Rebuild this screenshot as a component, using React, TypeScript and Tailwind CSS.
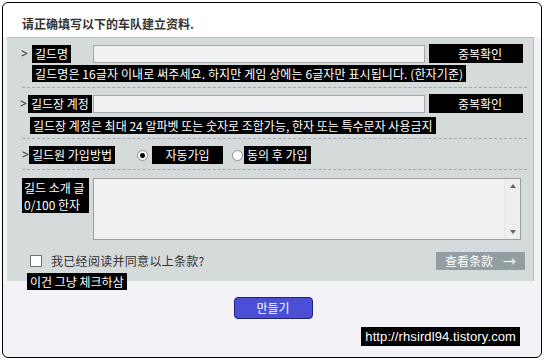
import { ChangeEvent, useState } from 'react'

const kr = { fontFamily: '"Noto Sans CJK KR", "Noto Sans", sans-serif' }
const sc = { fontFamily: '"Noto Sans CJK SC", "Noto Sans", sans-serif' }

function Tag({ children, className = '' }: { children: React.ReactNode; className?: string }) {
  return (
    <span
      className={`inline-flex items-center whitespace-nowrap bg-black px-[3px] text-[12px] leading-none text-white ${className}`}
      style={kr}
    >
      {children}
    </span>
  )
}

function Dots() {
  return <div className="ml-[15px] mr-[6px] border-t border-dashed border-[#a3a9ac]" />
}

function Radio({ on }: { on?: boolean }) {
  return (
    <span className="flex h-[11px] w-[11px] items-center justify-center rounded-full border border-[#8a8f94] bg-white">
      {on && <span className="h-[5px] w-[5px] rounded-full bg-black" />}
    </span>
  )
}

export default function App() {
  const [intro, setIntro] = useState('')

  return (
    <div className="h-[360px] w-[545px] bg-white pl-[2px] pt-[2px]">
      <div className="flex h-[356px] w-[540px] flex-col rounded-[6px] border border-black bg-[#f3f3f7]">
        {/* header */}
        <div className="flex h-[34px] items-center rounded-t-[6px] bg-white pl-[19px] pt-[8px]">
          <span className="text-[12px] font-bold text-[#333]" style={sc}>
            请正确填写以下的车队建立资料.
          </span>
        </div>

        {/* form panel */}
        <div className="ml-[4px] mr-[7px] flex flex-col border-r border-t border-[#b9bec1] bg-[#d5dadb] pb-[11px] pt-[6px]">
          {/* guild name */}
          <div className="flex h-[19px] items-center pl-[14px]">
            <span className="w-[11px] text-[12px] text-[#222]">&gt;</span>
            <div className="flex w-[61px]">
              <Tag className="h-[18px]">길드명</Tag>
            </div>
            <input className="h-[18px] w-[332px] border border-[#a4a8ac] bg-[#f0f1f3] outline-none" />
            <button className="ml-[4px] flex h-[19px] w-[94px] items-center justify-center bg-black pl-[8px] text-[12px] text-white" style={kr}>
              중복확인
            </button>
          </div>
          <div className="mt-[2px] flex pl-[25px]">
            <Tag className="h-[17px] tracking-[0.1px]">길드명은 16글자 이내로 써주세요. 하지만 게임 상에는 6글자만 표시됩니다. (한자기준)</Tag>
          </div>
          <div className="mt-[5px]">
            <Dots />
          </div>

          {/* guild master */}
          <div className="mt-[6px] flex h-[19px] items-center pl-[13px]">
            <span className="w-[8px] text-[12px] text-[#222]">&gt;</span>
            <div className="flex w-[65px]">
              <Tag className="h-[18px]">길드장 계정</Tag>
            </div>
            <input className="h-[18px] w-[332px] border border-[#a4a8ac] bg-[#f0f1f3] outline-none" />
            <button className="ml-[4px] flex h-[19px] w-[94px] items-center justify-center bg-black pl-[8px] text-[12px] text-white" style={kr}>
              중복확인
            </button>
          </div>
          <div className="mt-[4px] flex pl-[23px]">
            <Tag className="h-[17px]">길드장 계정은 최대 24 알파벳 또는 숫자로 조합가능, 한자 또는 특수문자 사용금지</Tag>
          </div>
          <div className="mt-[4px]">
            <Dots />
          </div>

          {/* join method */}
          <div className="mt-[7px] flex h-[18px] items-center pl-[15px]">
            <span className="w-[7px] text-[12px] text-[#222]">&gt;</span>
            <Tag className="h-[18px]">길드원 가입방법</Tag>
            <span className="ml-[22px]">
              <Radio on />
            </span>
            <Tag className="ml-[4px] h-[18px] w-[71px] justify-center">자동가입</Tag>
            <span className="ml-[9px]">
              <Radio />
            </span>
            <Tag className="ml-[1px] h-[18px]">동의 후 가입</Tag>
          </div>
          <div className="mt-[5px]">
            <Dots />
          </div>

          {/* intro */}
          <div className="mt-[8px] flex pl-[15px]">
            <div className="flex h-[35px] w-[67px] flex-col justify-center bg-black pl-[2px] text-[12px] leading-[17px] text-white" style={kr}>
              <span>길드 소개 글</span>
              <span>0/100 한자</span>
            </div>
            <div className="ml-[4px] flex h-[62px] w-[428px] border border-[#9a9ea2] bg-[#eff1f3]">
              <textarea
                value={intro}
                onChange={(e: ChangeEvent<HTMLTextAreaElement>) => setIntro(e.target.value)}
                className="h-full flex-1 resize-none bg-transparent outline-none"
              />
              <div className="flex w-[16px] flex-col items-center justify-between border-l border-[#e4e6e8] bg-[#eceef0] py-[5px]">
                <span className="h-0 w-0 border-x-[3px] border-b-[4px] border-x-transparent border-b-[#666]" />
                <span className="h-0 w-0 border-x-[3px] border-t-[4px] border-x-transparent border-t-[#666]" />
              </div>
            </div>
          </div>

          {/* agree */}
          <div className="mt-[12px] flex h-[18px] items-center pl-[23px] pr-[8px]">
            <span className="h-[12px] w-[12px] border border-[#6d7176] bg-white" />
            <span className="ml-[9px] text-[12px] tracking-[0.3px] text-[#333]" style={sc}>
              我已经阅读并同意以上条款?
            </span>
            <button className="ml-auto flex h-[18px] w-[89px] items-center justify-center gap-[10px] bg-[#929ea2] text-[12px] text-white" style={sc}>
              查看条款 <span className="text-[13px]">→</span>
            </button>
          </div>
        </div>

        <div className="relative -mt-[8px] flex pl-[24px]">
          <Tag className="h-[17px]">이건 그냥 체크하삼</Tag>
        </div>

        <button
          className="mx-auto mt-[7px] flex h-[22px] w-[79px] translate-x-[1px] items-center justify-center rounded-[4px] border border-[#1f2278] bg-[#4b4fd6] text-[12px] text-white"
          style={kr}
        >
          만들기
        </button>

        <div className="mr-[21px] mt-[8px] flex justify-end">
          <span
            className="flex h-[19px] items-center bg-black px-[4px] text-[13px] tracking-[0.1px] text-white"
            style={{ fontFamily: '"Liberation Sans", Arial, sans-serif' }}
          >
            http://rhsirdl94.tistory.com
          </span>
        </div>
      </div>
    </div>
  )
}
